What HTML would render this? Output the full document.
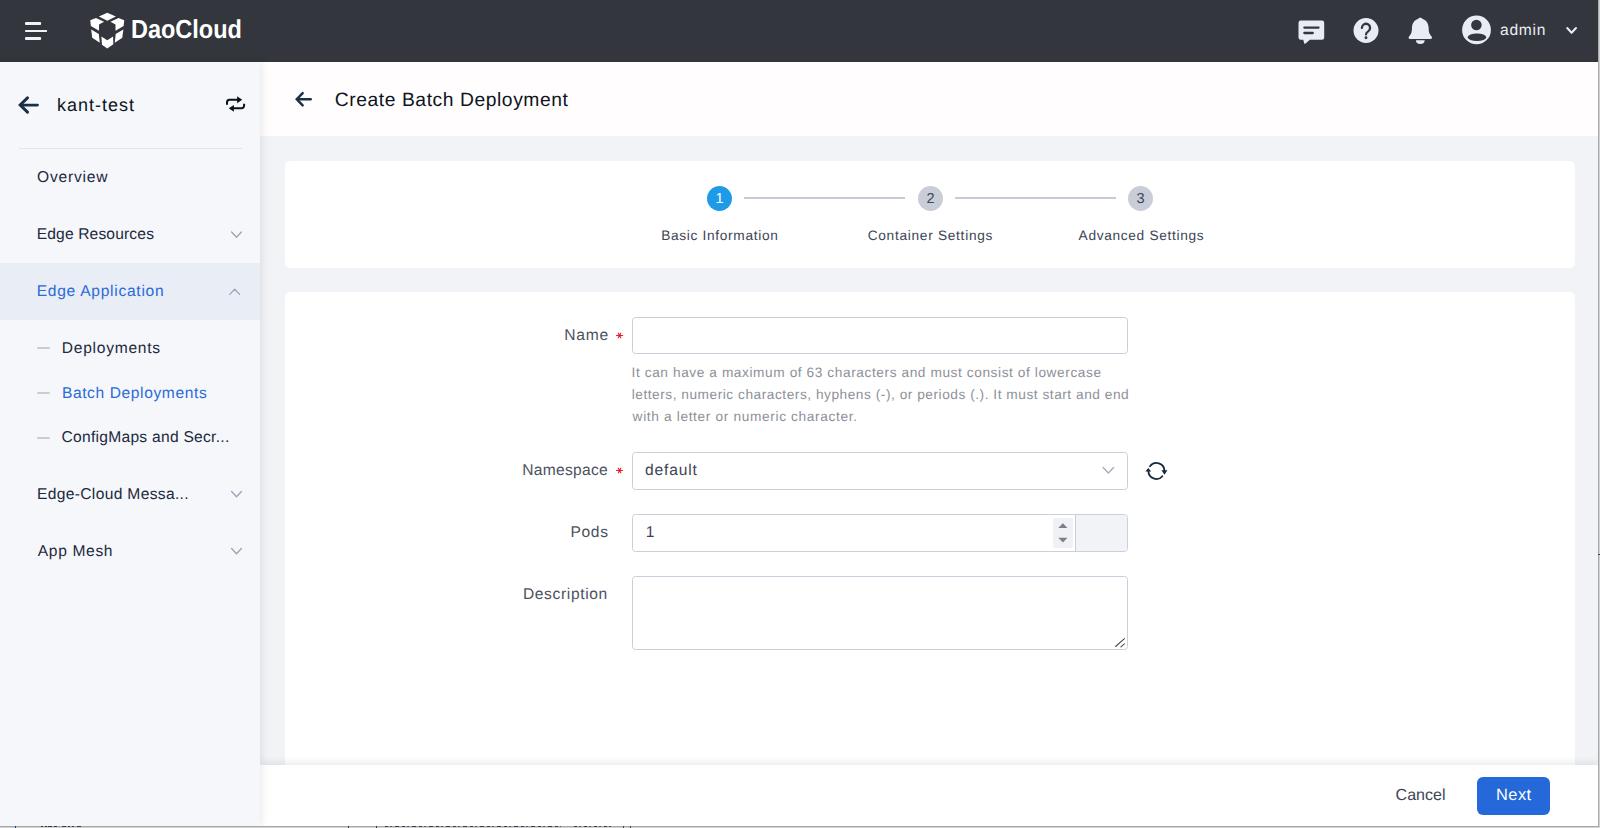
<!DOCTYPE html>
<html lang="en">
<head>
<meta charset="utf-8">
<title>Create Batch Deployment</title>
<style>
*{box-sizing:border-box;margin:0;padding:0}
html,body{width:1600px;height:828px;overflow:hidden;background:#fff}
body{position:relative;font-family:"Liberation Sans",sans-serif;color:#1b2a3d;-webkit-font-smoothing:antialiased;text-rendering:geometricPrecision}
.abs{position:absolute}
.t{position:absolute;white-space:nowrap;line-height:1;display:block}
/* frame */
#hdr{left:0;top:0;width:1598px;height:62px;background:#33363c}
#side{left:0;top:62px;width:260px;height:764px;background:#f6f7fb;box-shadow:1px 0 8px rgba(30,25,40,.115);z-index:3}
#titlebar{left:260px;top:62px;width:1338px;height:74px;background:#fffdfd;z-index:1}
#content{left:260px;top:136px;width:1338px;height:690px;background:#f1f3f6}
#card1{left:285px;top:161px;width:1290px;height:107px;background:#fff;border-radius:5px}
#card2{left:285px;top:292px;width:1290px;height:500px;background:#fff;border-radius:5px 5px 0 0}
#footer{left:260px;top:765px;width:1338px;height:61px;background:#fff;box-shadow:0 -2px 8px rgba(20,25,40,.10);z-index:2}
#redge{left:1598px;top:0;width:1px;height:828px;background:#a9a9a9;z-index:9}
#redge2{left:1599px;top:0;width:1px;height:828px;background:#d2d2d2;z-index:9}
#bedge{left:0;top:826px;width:1599px;height:1px;background:#a9a9a9;z-index:9}
#bedge2{left:0;top:827px;width:1600px;height:1px;background:#d2d2d2;z-index:9}

/* sidebar bits */
#actbg{left:0;top:263px;width:260px;height:57px;background:#e9edf6;z-index:4}
#sdiv{left:19px;top:148px;width:223px;height:1px;background:#e1e4ea;z-index:4}
.dash{left:37px;width:13px;height:2px;background:#c6ccd8;z-index:4;border-radius:1px}
/* stepper */
.stc{width:25px;height:25px;border-radius:50%;top:186px;background:#c9cdd8}
.stl{top:197px;height:2px;background:#c6cad7}
.stn{position:absolute;top:186.8px;width:25px;height:25px;line-height:25px;text-align:center;font-size:14.5px;color:#3d4556}
/* form */
.inp{left:632px;width:496px;height:37px;border:1px solid #cacfdb;border-radius:3.5px;background:#fff}
#addon{left:1075px;top:515px;width:52px;height:36px;background:#f1f3f7;border-left:1px solid #cacfdb;border-radius:0 3px 3px 0}
#spin{left:1053px;top:518px;width:20px;height:30px;background:#f0f1f4;border-radius:2px}
#nextbtn{left:1477px;top:777px;width:73px;height:38px;background:#2468d9;border-radius:6px;z-index:4}
#ov{left:0;top:0;width:1600px;height:828px;z-index:6;pointer-events:none}
/*TEXTCSS-START*/
#logo{left:130.8px;top:16.1px;font-size:26px;color:#ffffff;font-weight:700;transform-origin:0 0;transform:scaleX(0.9034);z-index:5;}
#admin{left:1500.0px;top:23.3px;font-size:15.6px;color:#e9ecf5;letter-spacing:0.75px;z-index:5;}
#ws{left:56.9px;top:95.8px;font-size:18px;color:#0e1422;letter-spacing:1.0px;z-index:5;}
#m1{left:37.0px;top:170.1px;font-size:15.6px;color:#1b2a3d;letter-spacing:0.79px;z-index:5;}
#m2{left:36.7px;top:226.8px;font-size:15.6px;color:#1b2a3d;letter-spacing:0.15px;z-index:5;}
#m3{left:36.7px;top:283.9px;font-size:15.6px;color:#2a6bd9;letter-spacing:0.72px;z-index:5;}
#s1{left:61.8px;top:341.1px;font-size:15.6px;color:#1b2a3d;letter-spacing:0.73px;z-index:5;}
#s2{left:61.9px;top:385.9px;font-size:15.6px;color:#2a6bd9;letter-spacing:0.6px;z-index:5;}
#s3{left:61.5px;top:430.3px;font-size:15.6px;color:#1b2a3d;letter-spacing:0.27px;z-index:5;}
#m4{left:37.0px;top:487.1px;font-size:15.6px;color:#1b2a3d;letter-spacing:0.33px;z-index:5;}
#m5{left:37.8px;top:543.6px;font-size:15.6px;color:#1b2a3d;letter-spacing:0.64px;z-index:5;}
#title{left:334.8px;top:91px;font-size:19.3px;color:#0e1422;letter-spacing:0.56px;z-index:5;}
#st1{left:661.2px;top:228.7px;font-size:13.7px;color:#3d4556;letter-spacing:0.68px;}
#st2{left:867.7px;top:228.7px;font-size:13.7px;color:#3d4556;letter-spacing:0.71px;}
#st3{left:1078.6px;top:228.7px;font-size:13.7px;color:#3d4556;letter-spacing:0.68px;}
#l1{left:564.2px;top:328px;font-size:15.6px;color:#4c525e;letter-spacing:0.8px;}
#l2{left:522.2px;top:463px;font-size:15.6px;color:#4c525e;letter-spacing:0.3px;}
#l3{left:570.4px;top:525px;font-size:15.6px;color:#4c525e;letter-spacing:0.67px;}
#l4{left:522.9px;top:586.8px;font-size:15.6px;color:#4c525e;letter-spacing:0.64px;}
#v1{left:645.0px;top:463px;font-size:15.6px;color:#3d4556;letter-spacing:0.83px;}
#v2{left:645.8px;top:525.4px;font-size:15.6px;color:#3d4556;}
#h1{left:631.6px;top:366px;font-size:13.7px;color:#8e9199;letter-spacing:0.58px;}
#h2{left:631.7px;top:388px;font-size:13.7px;color:#8e9199;letter-spacing:0.53px;}
#h3{left:632.6px;top:410px;font-size:13.7px;color:#8e9199;letter-spacing:0.65px;}
#cancel{left:1395.6px;top:787.8px;font-size:16px;color:#3d4556;letter-spacing:0.02px;z-index:5;}
#next{left:1496.1px;top:786.8px;font-size:16.4px;color:#ffffff;letter-spacing:0.43px;z-index:5;}
/*TEXTCSS-END*/
</style>
</head>
<body>
<div id="hdr" class="abs"></div>
<div id="content" class="abs"></div>
<div id="titlebar" class="abs"></div>
<div id="card1" class="abs"></div>
<div id="card2" class="abs"></div>
<div id="side" class="abs"></div>
<div id="footer" class="abs"></div>

<div id="actbg" class="abs"></div>
<div id="sdiv" class="abs"></div>
<div class="abs dash" style="top:347px"></div>
<div class="abs dash" style="top:392px"></div>
<div class="abs dash" style="top:436.5px"></div>

<div class="abs stc" style="left:707px;background:#1e9be8"></div>
<div class="abs stl" style="left:744px;width:161px"></div>
<div class="abs stc" style="left:918px"></div>
<div class="abs stl" style="left:955px;width:161px"></div>
<div class="abs stc" style="left:1128px"></div>
<span class="stn" style="left:707px;color:#fff">1</span>
<span class="stn" style="left:918px">2</span>
<span class="stn" style="left:1128px">3</span>

<div class="abs inp" style="top:317px"></div>
<div class="abs inp" style="top:452px;height:38px"></div>
<div class="abs inp" style="top:514px;height:38px"></div>
<div id="addon" class="abs"></div>
<div id="spin" class="abs"></div>
<div class="abs inp" style="top:576px;height:74px"></div>
<div id="nextbtn" class="abs"></div>
<!--TEXT-START-->
<span id="logo" class="t">DaoCloud</span>
<span id="admin" class="t">admin</span>
<span id="ws" class="t">kant-test</span>
<span id="m1" class="t">Overview</span>
<span id="m2" class="t">Edge Resources</span>
<span id="m3" class="t">Edge Application</span>
<span id="s1" class="t">Deployments</span>
<span id="s2" class="t">Batch Deployments</span>
<span id="s3" class="t">ConfigMaps and Secr...</span>
<span id="m4" class="t">Edge-Cloud Messa...</span>
<span id="m5" class="t">App Mesh</span>
<span id="title" class="t">Create Batch Deployment</span>
<span id="st1" class="t">Basic Information</span>
<span id="st2" class="t">Container Settings</span>
<span id="st3" class="t">Advanced Settings</span>
<span id="l1" class="t">Name</span>
<span id="l2" class="t">Namespace</span>
<span id="l3" class="t">Pods</span>
<span id="l4" class="t">Description</span>
<span id="v1" class="t">default</span>
<span id="v2" class="t">1</span>
<span id="h1" class="t">It can have a maximum of 63 characters and must consist of lowercase</span>
<span id="h2" class="t">letters, numeric characters, hyphens (-), or periods (.). It must start and end</span>
<span id="h3" class="t">with a letter or numeric character.</span>
<span id="cancel" class="t">Cancel</span>
<span id="next" class="t">Next</span>
<!--TEXT-END-->

<svg id="ov" class="abs" viewBox="0 0 1600 828" width="1600" height="828">
<!-- hamburger -->
<g fill="#f1f3f9">
<rect x="25" y="22" width="16.1" height="3" rx="1"/>
<rect x="25" y="29.95" width="22.1" height="2.15" rx="0.8"/>
<rect x="25" y="37.05" width="16.1" height="3" rx="1"/>
</g>
<!-- logo cube -->
<g fill="#ffffff" transform="translate(86 8) scale(0.05314)">
<polygon points="243,160 400,90 562,160 400,238"/>
<polygon points="80,232 188,187 340,260 245,312 245,430 92,340"/>
<polygon points="720,232 612,187 460,260 555,312 555,430 708,340"/>
<polygon points="97,403 241,488 259,655 117,562"/>
<polygon points="703,403 559,488 541,655 683,562"/>
<polygon points="290,538 400,605 510,538 514,680 400,762 300,690"/>
</g>
<!-- chat icon -->
<path fill="#e9ecf5" d="M1300.7,20.6 h21.3 a2.2,2.2 0 0 1 2.2,2.2 v14.7 a2.2,2.2 0 0 1 -2.2,2.2 h-12.1 l-4.3,3.9 a0.9,0.9 0 0 1 -1.5,-0.5 l-0.8,-3.4 h-2.6 a2.2,2.2 0 0 1 -2.2,-2.2 v-14.7 a2.2,2.2 0 0 1 2.2,-2.2 z"/>
<g stroke="#33363c" stroke-width="2.3" stroke-linecap="round">
<line x1="1304.35" y1="27.55" x2="1318.55" y2="27.55"/>
<line x1="1304.35" y1="33" x2="1312.75" y2="33"/>
</g>
<!-- help icon -->
<circle cx="1366" cy="30.5" r="12.5" fill="#e9ecf5"/>
<path fill="none" stroke="#33363c" stroke-width="2.3" stroke-linecap="round" d="M1361.9,27.9 a4.1,4.1 0 1 1 6.3,3.45 c-1.5,0.95 -2.2,1.6 -2.2,3.1"/>
<circle cx="1366" cy="37.8" r="1.45" fill="#33363c"/>
<!-- bell -->
<path fill="#e9ecf5" d="M1420.3,17.7 C1421.6,17.7 1422.3,18.4 1422.6,19 C1426.3,20 1428.5,23.5 1428.6,27.5 L1428.8,30.5 C1428.9,32.8 1429.9,34.6 1431.4,36.3 C1432.5,37.4 1432,39 1430.6,39 L1410,39 C1408.6,39 1408.1,37.4 1409.2,36.3 C1410.7,34.6 1411.7,32.8 1411.8,30.5 L1412,27.5 C1412.1,23.5 1414.3,20 1418,19 C1418.3,18.4 1419,17.7 1420.3,17.7 Z"/>
<path fill="#e9ecf5" d="M1415.9,40.3 H1424.7 A4.4,3.7 0 0 1 1415.9,40.3 Z"/>
<!-- avatar -->
<circle cx="1476.5" cy="29.9" r="14.4" fill="#e9ecf5"/>
<circle cx="1476.4" cy="25" r="5.3" fill="#33363c"/>
<ellipse cx="1477" cy="37.2" rx="9.2" ry="3.8" fill="#33363c"/>
<!-- header chevron -->
<polyline fill="none" stroke="#e9ecf5" stroke-width="2" stroke-linecap="round" stroke-linejoin="round" points="1567.2,28 1571.6,32.8 1576,28"/>
<!-- sidebar back arrow -->
<path fill="none" stroke="#1b3047" stroke-width="3" stroke-linecap="round" stroke-linejoin="miter" d="M27.5,97.9 L20.2,105 L27.5,112.1"/>
<path fill="none" stroke="#1b3047" stroke-width="2.6" stroke-linecap="round" d="M21.5,105.1 H37.6"/>
<!-- switch icon -->
<g fill="none" stroke="#0b111c" stroke-width="2" stroke-linecap="butt">
<path d="M227,104.8 V102.2 a2.5,2.5 0 0 1 2.5,-2.5 H238"/>
<path d="M244.1,103.8 V105.8 a2.5,2.5 0 0 1 -2.5,2.5 H233"/>
</g>
<polygon fill="#0b111c" points="237.1,96.2 242.2,99.7 237.1,103.2"/>
<polygon fill="#0b111c" points="233.9,104.9 228.8,108.35 233.9,111.8"/>
<!-- sidebar chevrons -->
<g fill="none" stroke="#9aa4b4" stroke-width="1.3" stroke-linecap="round" stroke-linejoin="round">
<polyline points="231.6,232 236.5,237.3 241.4,232"/>
<polyline points="229.8,294.4 234.7,289.1 239.6,294.4"/>
<polyline points="231.6,491.5 236.5,496.8 241.4,491.5"/>
<polyline points="231.6,548.5 236.5,553.8 241.4,548.5"/>
</g>
<!-- title back arrow -->
<path fill="none" stroke="#1b3047" stroke-width="2.5" stroke-linecap="round" stroke-linejoin="miter" d="M302.65,93.2 L296.8,99.25 L302.65,105.3"/>
<path fill="none" stroke="#1b3047" stroke-width="2.5" stroke-linecap="round" d="M298,99.3 H310.7"/>
<!-- required asterisks -->
<g stroke="#e5202c" stroke-width="1.15" stroke-linecap="round">
<path d="M616.4499999999999,335.5 H622.65 M618.3,333.15 L620.8,337.85 M620.8,333.15 L618.3,337.85"/>
<path d="M616.4499999999999,470.5 H622.65 M618.3,468.15 L620.8,472.85 M620.8,468.15 L618.3,472.85"/>
</g>
<!-- select chevron -->
<polyline fill="none" stroke="#a0a9b8" stroke-width="1.2" stroke-linecap="round" stroke-linejoin="round" points="1103.1,467.5 1108.35,473 1113.6,467.5"/>
<!-- refresh icon -->
<g fill="none" stroke="#15293d" stroke-width="1.8" stroke-linecap="round">
<path d="M1150,466.2 A8,8 0 0 1 1164.4,471"/>
<path d="M1162.4,476.25 A8,8 0 0 1 1148.4,471"/>
</g>
<polygon fill="#15293d" points="1161.4,470.3 1167.4,470.3 1164.5,474.7"/>
<polygon fill="#15293d" points="1145.4,471.6 1151.2,471.6 1148.3,467.9"/>
<!-- number spinner -->
<polygon fill="#7a7f88" points="1058.3,528 1062.9,523.3 1067.5,528"/>
<polygon fill="#7a7f88" points="1058.3,537.8 1062.9,542.6 1067.5,537.8"/>
<!-- textarea resizer -->
<g stroke="#4a4a4a" stroke-width="1.1" stroke-linecap="round">
<line x1="1115.6" y1="646.5" x2="1124.4" y2="638.6"/>
<line x1="1120.9" y1="646.9" x2="1124.4" y2="643.8"/>
</g>
</svg>
<div class="abs" style="left:15px;top:826px;width:1px;height:2px;background:#173f73;z-index:10"></div>
<div class="abs" style="left:41px;top:826px;width:2px;height:1px;background:#3a3d46;z-index:10"></div>
<div class="abs" style="left:44.7px;top:826px;width:2.2px;height:1px;background:#3a3d46;z-index:10"></div>
<div class="abs" style="left:47.8px;top:826px;width:4.4px;height:1px;background:#3a3d46;z-index:10"></div>
<div class="abs" style="left:54.4px;top:826px;width:2.8px;height:1px;background:#3a3d46;z-index:10"></div>
<div class="abs" style="left:61.9px;top:826px;width:4.35px;height:1px;background:#3a3d46;z-index:10"></div>
<div class="abs" style="left:67.8px;top:826px;width:2.2px;height:1px;background:#3a3d46;z-index:10"></div>
<div class="abs" style="left:72.2px;top:826px;width:2.2px;height:1px;background:#3a3d46;z-index:10"></div>
<div class="abs" style="left:76.9px;top:826px;width:3.7px;height:1px;background:#3a3d46;z-index:10"></div>
<div class="abs" style="left:348px;top:826px;width:1px;height:2px;background:#333;z-index:10"></div>
<div class="abs" style="left:376px;top:826px;width:1px;height:2px;background:#333;z-index:10"></div>
<div class="abs" style="left:574px;top:826px;width:38px;height:1px;z-index:10;background:repeating-linear-gradient(90deg,#3a3d46 0 3px,#a9a9a9 3px 5px,#55585f 5px 7px,#a9a9a9 7px 10px)"></div>
<div class="abs" style="left:385px;top:826px;width:176px;height:1px;z-index:10;background:repeating-linear-gradient(90deg,#3a3d46 0 3px,#a9a9a9 3px 5px,#55585f 5px 7px,#a9a9a9 7px 10px,#3a3d46 10px 14px,#a9a9a9 14px 17px)"></div>
<div class="abs" style="left:623px;top:826px;width:1px;height:2px;background:#444;z-index:10"></div>
<div class="abs" style="left:630px;top:826px;width:1px;height:2px;background:#444;z-index:10"></div>
<div class="abs" style="left:1598px;top:554px;width:2px;height:1px;background:#204a7c;z-index:10"></div>
<div id="redge" class="abs"></div><div id="redge2" class="abs"></div>
<div id="bedge" class="abs"></div><div id="bedge2" class="abs"></div>
</body>
</html>
